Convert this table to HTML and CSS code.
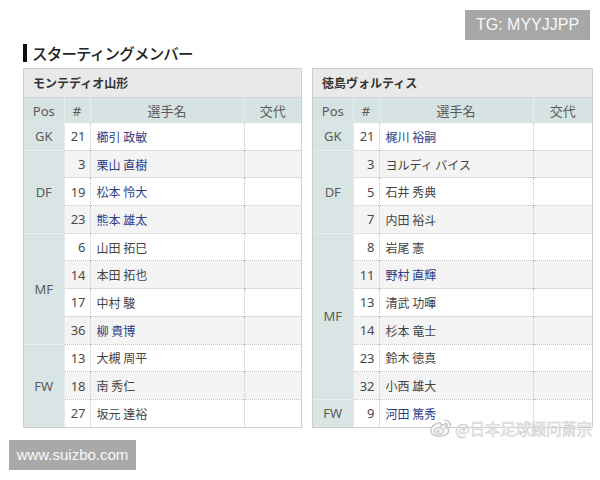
FILE: index.html
```html
<!DOCTYPE html>
<html lang="ja">
<head>
<meta charset="utf-8">
<title>スターティングメンバー</title>
<link rel="stylesheet" href="styles.css">
</head>
<body>
<main class="page">
  <h2 class="title">スターティングメンバー</h2>
  <div class="teams">
    <section class="team">
      <div class="team-name">モンテディオ山形</div>
      <table class="lineup">
        <colgroup><col class="c-pos"><col class="c-num"><col class="c-name"><col class="c-sub"></colgroup>
        <thead><tr><th>Pos</th><th>#</th><th>選手名</th><th>交代</th></tr></thead>
        <tbody>
          <tr class="odd"><td class="pos">GK</td><td class="num">21</td><td class="name link">櫛引 政敏</td><td class="sub"></td></tr>
          <tr class="even grp"><td class="pos" rowspan="3">DF</td><td class="num">3</td><td class="name link">栗山 直樹</td><td class="sub"></td></tr>
          <tr class="odd"><td class="num">19</td><td class="name link">松本 怜大</td><td class="sub"></td></tr>
          <tr class="even"><td class="num">23</td><td class="name link">熊本 雄太</td><td class="sub"></td></tr>
          <tr class="odd grp"><td class="pos" rowspan="4">MF</td><td class="num">6</td><td class="name">山田 拓巳</td><td class="sub"></td></tr>
          <tr class="even"><td class="num">14</td><td class="name">本田 拓也</td><td class="sub"></td></tr>
          <tr class="odd"><td class="num">17</td><td class="name">中村 駿</td><td class="sub"></td></tr>
          <tr class="even"><td class="num">36</td><td class="name link">柳 貴博</td><td class="sub"></td></tr>
          <tr class="odd grp"><td class="pos" rowspan="3">FW</td><td class="num">13</td><td class="name">大槻 周平</td><td class="sub"></td></tr>
          <tr class="even"><td class="num">18</td><td class="name">南 秀仁</td><td class="sub"></td></tr>
          <tr class="odd"><td class="num">27</td><td class="name">坂元 達裕</td><td class="sub"></td></tr>
        </tbody>
      </table>
    </section>
    <section class="team">
      <div class="team-name">徳島ヴォルティス</div>
      <table class="lineup">
        <colgroup><col class="c-pos"><col class="c-num"><col class="c-name"><col class="c-sub"></colgroup>
        <thead><tr><th>Pos</th><th>#</th><th>選手名</th><th>交代</th></tr></thead>
        <tbody>
          <tr class="odd"><td class="pos">GK</td><td class="num">21</td><td class="name link">梶川 裕嗣</td><td class="sub"></td></tr>
          <tr class="even grp"><td class="pos" rowspan="3">DF</td><td class="num">3</td><td class="name">ヨルディ バイス</td><td class="sub"></td></tr>
          <tr class="odd"><td class="num">5</td><td class="name">石井 秀典</td><td class="sub"></td></tr>
          <tr class="even"><td class="num">7</td><td class="name">内田 裕斗</td><td class="sub"></td></tr>
          <tr class="odd grp"><td class="pos" rowspan="6">MF</td><td class="num">8</td><td class="name">岩尾 憲</td><td class="sub"></td></tr>
          <tr class="even"><td class="num">11</td><td class="name link">野村 直輝</td><td class="sub"></td></tr>
          <tr class="odd"><td class="num">13</td><td class="name">清武 功暉</td><td class="sub"></td></tr>
          <tr class="even"><td class="num">14</td><td class="name">杉本 竜士</td><td class="sub"></td></tr>
          <tr class="odd"><td class="num">23</td><td class="name">鈴木 徳真</td><td class="sub"></td></tr>
          <tr class="even"><td class="num">32</td><td class="name">小西 雄大</td><td class="sub"></td></tr>
          <tr class="odd grp"><td class="pos">FW</td><td class="num">9</td><td class="name link">河田 篤秀</td><td class="sub"></td></tr>
        </tbody>
      </table>
    </section>
  </div>
</main>

<div class="wm-tg">TG: MYYJJPP</div>
<div class="wm-site">www.suizbo.com</div>
<div class="wm-weibo">
  <svg class="weibo-logo" width="24" height="22" viewBox="0 0 24 22" aria-hidden="true">
    <path d="M9.5 5.5C5 7 1.5 10.5 1.8 14c.3 3.5 4.6 5.8 9.4 5.4 5.2-.4 9-3.3 8.6-6.3-.2-1.6-1.8-2.4-3.2-2.4.8-1.6.4-2.8-1-3-1.3-.2-2.8.5-3.6 1 .4-1.6 0-3.2-2.5-3.2z" fill="#f6f6f6" stroke="#c6c6c6" stroke-width="1.3"/>
    <ellipse cx="9.8" cy="14" rx="4.6" ry="3.4" fill="none" stroke="#c6c6c6" stroke-width="1.2"/>
    <circle cx="9" cy="14.5" r="1.4" fill="#cccccc"/>
    <path d="M15.5 3.2a5 5 0 0 1 5.6 6.2" fill="none" stroke="#c6c6c6" stroke-width="1.4" stroke-linecap="round"/>
    <path d="M15.8 6.2a2.2 2.2 0 0 1 2.4 2.8" fill="none" stroke="#c6c6c6" stroke-width="1.3" stroke-linecap="round"/>
  </svg>
  <span class="weibo-text">@日本足球顾问萧宗</span>
</div>
</body>
</html>
```

FILE: styles.css
```css
html, body {
  margin: 0;
  padding: 0;
  background: #ffffff;
}

body {
  width: 600px;
  height: 480px;
  position: relative;
  overflow: hidden;
  font-family: "Noto Sans", "Noto Sans CJK JP", sans-serif;
  color: #444;
}

.page {
  padding: 44px 0 0 23px;
}

.title {
  margin: 0 0 6px 0;
  padding-left: 5px;
  border-left: 4px solid #111;
  font-family: "Noto Sans CJK JP", sans-serif;
  font-size: 15.5px;
  font-weight: 500;
  line-height: 18px;
  color: #222;
  letter-spacing: -0.8px;
}

.teams {
  display: grid;
  grid-template-columns: 279px 281px;
  column-gap: 10px;
}

.team {
  border: 1px solid #cfcfcf;
  background: #fff;
}

.team-name {
  height: 28px;
  line-height: 28px;
  padding-left: 9px;
  background: #e9e9e9;
  border-bottom: 1px solid #d6d6d6;
  font-family: "Noto Sans CJK JP", sans-serif;
  font-weight: 700;
  font-size: 12px;
  color: #333;
}

.lineup {
  width: 100%;
  border-collapse: collapse;
  table-layout: fixed;
  font-size: 13px;
}

.c-pos { width: 40px; }
.c-num { width: 26px; }
.c-name { width: 154px; }

.lineup th {
  height: 25px;
  padding: 0;
  background: #d6e3e2;
  font-weight: 400;
  font-size: 13px;
  color: #5a5a5a;
  text-align: center;
  border-left: 1px solid #e6eeed;
  font-family: "Noto Sans", "Noto Sans CJK JP", sans-serif;
}

.lineup th:first-child { border-left: none; }

.lineup td {
  height: 26.7px;
  padding: 0;
  border-top: 1px dotted #c4c4c4;
}

.lineup tbody tr:first-child td { border-top: none; }

.lineup tr.odd td { background: #ffffff; }
.lineup tr.even td { background: #f4f4f4; }

.lineup td.pos {
  background: #d8e5e4 !important;
  text-align: center;
  color: #5a5a5a;
  font-size: 13px;
  border-top: 1px solid #e8efee;
  border-right: 1px solid #e3ecea;
}

.lineup tbody tr:first-child td.pos { border-top: none; }

.lineup td.num {
  text-align: right;
  padding-right: 4px;
  color: #4a4a4a;
  border-right: 1px dotted #c4c4c4;
}

.lineup td.name {
  padding-left: 6px;
  font-family: "Noto Sans CJK JP", sans-serif;
  font-size: 12px;
  color: #444;
  border-right: 1px dotted #c4c4c4;
  white-space: nowrap;
}

.lineup td.name.link { color: #2b3c86; }

.wm-tg {
  position: absolute;
  left: 465px;
  top: 10px;
  width: 125px;
  height: 30px;
  line-height: 30px;
  text-align: center;
  background: #a7a7a7;
  color: #f7f7f7;
  font-family: "Liberation Sans", Arial, sans-serif;
  font-size: 16px;
}

.wm-site {
  position: absolute;
  left: 9px;
  top: 440px;
  width: 127px;
  height: 30px;
  line-height: 30px;
  text-align: center;
  background: #a9a9a9;
  color: #fafafa;
  font-family: "Liberation Sans", Arial, sans-serif;
  font-size: 15px;
}

.wm-weibo {
  position: absolute;
  left: 429px;
  top: 417px;
  display: flex;
  align-items: center;
  gap: 2px;
}

.weibo-text {
  font-family: "Noto Sans CJK SC", sans-serif;
  font-size: 15.5px;
  line-height: 22px;
  color: #f7f7f7;
  -webkit-text-stroke: 0.5px #c8c8c8;
  letter-spacing: -0.2px;
}
```
